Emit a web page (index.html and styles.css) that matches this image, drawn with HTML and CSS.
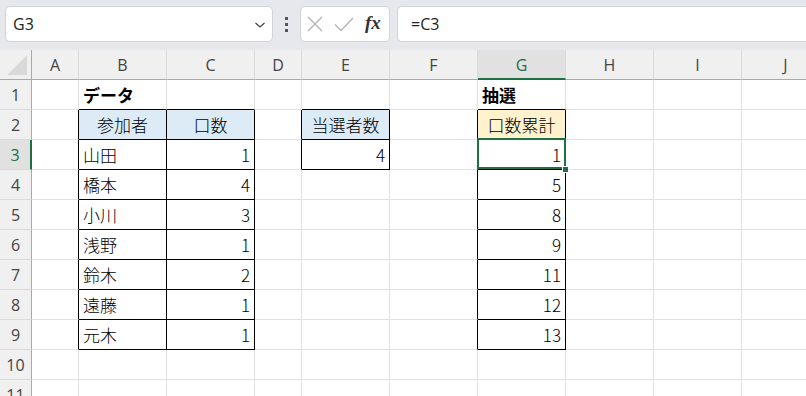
FILE: index.html
```html
<!DOCTYPE html>
<html lang="ja">
<head>
<meta charset="utf-8">
<title>Sheet</title>
<link rel="stylesheet" href="styles.css">
</head>
<body>
<div class="topbar">
  <div class="namebox">
    <span class="name">G3</span>
    <svg class="chev" width="12" height="8" viewBox="0 0 12 8"><polyline points="1.5,2 6,6 10.5,2" fill="none" stroke="#444" stroke-width="1.3"/></svg>
  </div>
  <div class="dots"><i></i><i></i><i></i></div>
  <div class="fxbox">
    <svg class="ico" width="16" height="16" viewBox="0 0 16 16"><path d="M1 1 L15 15 M15 1 L1 15" stroke="#b4b4b4" stroke-width="1.4" fill="none"/></svg>
    <svg class="ico" width="20" height="16" viewBox="0 0 20 16"><path d="M1 8.5 L7 14.5 L19 2" stroke="#b4b4b4" stroke-width="1.4" fill="none"/></svg>
    <span class="fx">fx</span>
  </div>
  <div class="formula">=C3</div>
</div>
<div class="sheet">
  <div class="ch corner"><span class="tri"></span></div>
  <div class="ch">A</div><div class="ch">B</div><div class="ch">C</div><div class="ch">D</div><div class="ch">E</div><div class="ch">F</div><div class="ch sel">G</div><div class="ch">H</div><div class="ch">I</div><div class="ch">J</div>

  <div class="rh">1</div>
  <div class="c"></div><div class="c bb b">データ</div><div class="c bb"></div><div class="c"></div><div class="c bb"></div><div class="c"></div><div class="c bb b">抽選</div><div class="c"></div><div class="c"></div><div class="c"></div>

  <div class="rh">2</div>
  <div class="c br"></div><div class="c br bb blue ctr">参加者</div><div class="c br bb blue ctr">口数</div><div class="c br"></div><div class="c br bb blue ctr">当選者数</div><div class="c br"></div><div class="c br bb orange ctr">口数累計</div><div class="c"></div><div class="c"></div><div class="c"></div>

  <div class="rh rsel">3</div>
  <div class="c br"></div><div class="c br bb">山田</div><div class="c br bb num">1</div><div class="c br"></div><div class="c br bb num">4</div><div class="c br"></div><div class="c br bb num active">1</div><div class="c"></div><div class="c"></div><div class="c"></div>

  <div class="rh">4</div>
  <div class="c br"></div><div class="c br bb">橋本</div><div class="c br bb num">4</div><div class="c"></div><div class="c"></div><div class="c br"></div><div class="c br bb num">5</div><div class="c"></div><div class="c"></div><div class="c"></div>

  <div class="rh">5</div>
  <div class="c br"></div><div class="c br bb">小川</div><div class="c br bb num">3</div><div class="c"></div><div class="c"></div><div class="c br"></div><div class="c br bb num">8</div><div class="c"></div><div class="c"></div><div class="c"></div>

  <div class="rh">6</div>
  <div class="c br"></div><div class="c br bb">浅野</div><div class="c br bb num">1</div><div class="c"></div><div class="c"></div><div class="c br"></div><div class="c br bb num">9</div><div class="c"></div><div class="c"></div><div class="c"></div>

  <div class="rh">7</div>
  <div class="c br"></div><div class="c br bb">鈴木</div><div class="c br bb num">2</div><div class="c"></div><div class="c"></div><div class="c br"></div><div class="c br bb num">11</div><div class="c"></div><div class="c"></div><div class="c"></div>

  <div class="rh">8</div>
  <div class="c br"></div><div class="c br bb">遠藤</div><div class="c br bb num">1</div><div class="c"></div><div class="c"></div><div class="c br"></div><div class="c br bb num">12</div><div class="c"></div><div class="c"></div><div class="c"></div>

  <div class="rh">9</div>
  <div class="c br"></div><div class="c br bb">元木</div><div class="c br bb num">1</div><div class="c"></div><div class="c"></div><div class="c br"></div><div class="c br bb num">13</div><div class="c"></div><div class="c"></div><div class="c"></div>

  <div class="rh">10</div>
  <div class="c"></div><div class="c"></div><div class="c"></div><div class="c"></div><div class="c"></div><div class="c"></div><div class="c"></div><div class="c"></div><div class="c"></div><div class="c"></div>

  <div class="rh">11</div>
  <div class="c"></div><div class="c"></div><div class="c"></div><div class="c"></div><div class="c"></div><div class="c"></div><div class="c"></div><div class="c"></div><div class="c"></div><div class="c"></div>
</div>
</body>
</html>
```
FILE: styles.css
```css
html, body {
  margin: 0;
  padding: 0;
  background: #fff;
  overflow: hidden;
  width: 806px;
  height: 396px;
}
body {
  font-family: "Noto Sans CJK JP", "Noto Sans", sans-serif;
  color: #000;
}
.topbar {
  height: 50px;
  box-sizing: border-box;
  background: #e6e8ed;
  display: flex;
  align-items: flex-start;
  padding: 6px 0 0 5px;
  overflow: hidden;
}
.namebox {
  width: 268px;
  height: 36px;
  box-sizing: border-box;
  background: #fff;
  border: 1px solid #d2d4d8;
  border-radius: 5px;
  display: flex;
  align-items: center;
  justify-content: space-between;
  padding: 0 6px 0 7px;
}
.name {
  font-family: "Open Sans", "Noto Sans", sans-serif;
  font-size: 16px;
  color: #222;
}
.chev { margin-top: 1px; }
.dots {
  width: 27px;
  height: 36px;
  display: flex;
  flex-direction: column;
  align-items: center;
  justify-content: center;
  gap: 3px;
}
.dots i {
  display: block;
  width: 3px;
  height: 3px;
  background: #555;
}
.fxbox {
  width: 90px;
  height: 36px;
  box-sizing: border-box;
  background: #fff;
  border: 1px solid #d2d4d8;
  border-radius: 5px;
  display: flex;
  align-items: center;
  padding: 0 0 0 6px;
  gap: 12px;
}
.fxbox .ico + .ico { margin-left: -1px; }
.fx {
  font-family: "Liberation Serif", "DejaVu Serif", serif;
  font-style: italic;
  font-weight: bold;
  font-size: 19px;
  color: #333;
  margin-left: -1px;
  margin-top: -2px;
}
.formula {
  margin-left: 7px;
  flex: 1;
  height: 36px;
  box-sizing: border-box;
  background: #fff;
  border: 1px solid #d2d4d8;
  border-right: none;
  border-radius: 5px 0 0 5px;
  display: flex;
  align-items: center;
  padding-left: 13px;
  font-family: "Open Sans", "Noto Sans", sans-serif;
  font-size: 16px;
  color: #222;
}
.sheet {
  display: grid;
  grid-template-columns: 32px 47px 88px 88px 47px 88px 88px 88px 88px 88px 88px;
  grid-auto-rows: 30px;
}
.sheet > div {
  box-sizing: border-box;
  display: flex;
  align-items: center;
  white-space: nowrap;
  overflow: visible;
}
.ch {
  background: #f0f0f0;
  border-right: 1px solid #dadada;
  border-bottom: 1px solid #a9a9a9;
  justify-content: center;
  font-family: "Open Sans", "Noto Sans", sans-serif;
  font-size: 16px;
  color: #444;
  padding-top: 1px;
}
.ch.sel {
  background: #e1e1e1;
  color: #1e6e45;
  border-bottom: 2px solid #1e7145;
}
.corner {
  position: relative;
  border-right: 1px solid #a9a9a9;
}
.tri {
  position: absolute;
  left: 7px;
  top: 5px;
  width: 20px;
  height: 20px;
  background: #d9d9d9;
  clip-path: polygon(100% 0, 100% 100%, 0 100%);
}
.rh {
  background: #f0f0f0;
  border-right: 1px solid #a9a9a9;
  border-bottom: 1px solid #dadada;
  justify-content: center;
  font-family: "Open Sans", "Noto Sans", sans-serif;
  font-size: 16px;
  color: #444;
}
.rh.rsel {
  background: #e1e1e1;
  color: #1e6e45;
  border-right: 2px solid #1e7145;
}
.c {
  border-right: 1px solid #e1e1e1;
  border-bottom: 1px solid #e1e1e1;
  padding: 0 4px;
  font-size: 17px;
  font-weight: 300;
}
.br { border-right-color: #000 !important; }
.bb { border-bottom-color: #000 !important; }
.c.b { font-weight: bold; }
.ctr { justify-content: center; }
.num { justify-content: flex-end; }
.blue { background: #ddebf7; }
.orange { background: #fff2cc; }
.active { position: relative; }
.active::after {
  content: "";
  position: absolute;
  left: -1px;
  top: -2px;
  right: -1px;
  bottom: 0;
  border: 2px solid #1e7145;
}
.active::before {
  content: "";
  position: absolute;
  left: 85px;
  top: 27px;
  width: 5px;
  height: 5px;
  background: #1e7145;
  border: 1px solid #fff;
  z-index: 2;
  margin: -1px 0 0 -1px;
}
```
